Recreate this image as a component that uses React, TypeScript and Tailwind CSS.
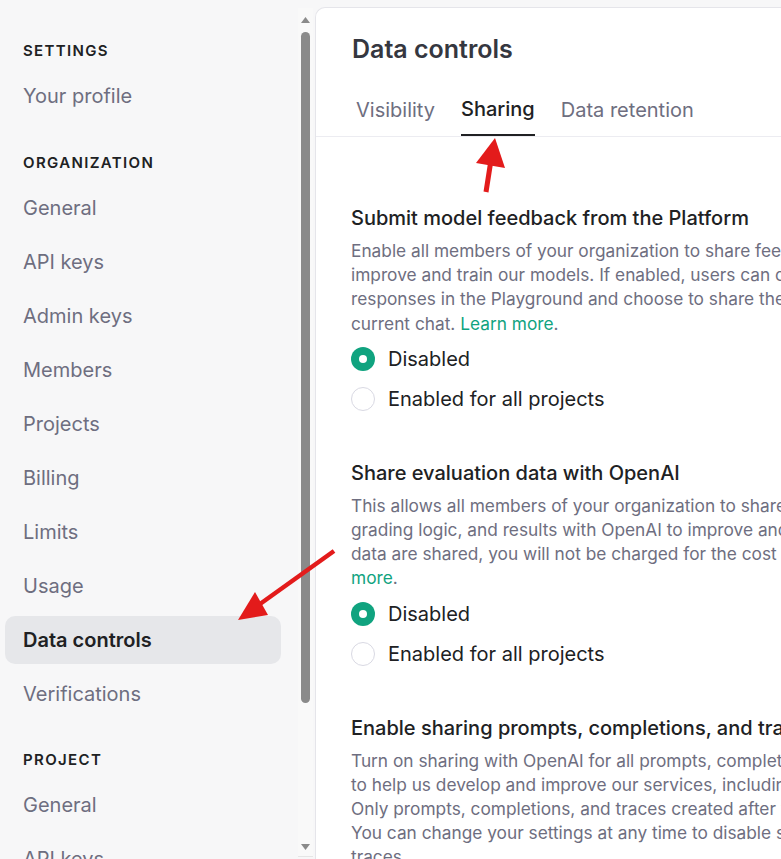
import React from "react";

const font = { fontFamily: "Inter, 'Noto Sans', sans-serif" };

function NavHeader({ label }: { label: string }) {
  return (
    <div className="h-[20px] px-[23px] flex items-center text-[15px] font-semibold tracking-[0.09em] text-[#202123]">
      {label}
    </div>
  );
}

function NavItem({ label, active }: { label: string; active?: boolean }) {
  return (
    <div
      className={
        active
          ? "h-[48px] mx-[5px] px-[18px] flex items-center rounded-[10px] bg-[#e6e7ea] text-[20px] font-semibold text-[#202123]"
          : "h-[48px] mx-[5px] px-[18px] flex items-center rounded-[10px] text-[20px] text-[#6e6e80]"
      }
    >
      {label}
    </div>
  );
}

function Radio({ label, checked }: { label: string; checked?: boolean }) {
  return (
    <div className="h-[40px] flex items-center gap-[13px]">
      {checked ? (
        <span className="size-[24px] rounded-full bg-[#10a37f] flex items-center justify-center">
          <span className="size-[8px] rounded-full bg-white" />
        </span>
      ) : (
        <span className="size-[24px] rounded-full border border-[#d9d9e3] bg-white" />
      )}
      <span className="text-[20px] text-[#202123]">{label}</span>
    </div>
  );
}

function Section({ title, lines, last }: { title: string; lines: React.ReactNode[]; last?: boolean }) {
  return (
    <div className="flex flex-col">
      <h3 className="h-[28px] flex items-center text-[20px] font-medium text-[#202123] whitespace-nowrap">{title}</h3>
      <div className="mt-[7px] flex flex-col text-[17.3px] leading-[24.2px] text-[#6e6e80]">
        {lines.map((l, i) => (
          <span key={i} className="whitespace-nowrap">
            {l}
          </span>
        ))}
      </div>
      {!last && (
        <div className="mt-[3px] flex flex-col">
          <Radio label="Disabled" checked />
          <Radio label="Enabled for all projects" />
        </div>
      )}
    </div>
  );
}

const green = "text-[#10a37f]";

export default function App() {
  return (
    <div className="relative w-[781px] h-[859px] overflow-hidden bg-[#f7f7f8] flex" style={font}>
      {/* Sidebar */}
      <div className="w-[286px] shrink-0 pt-[41px] flex flex-col">
        <NavHeader label="SETTINGS" />
        <div className="mt-[11px]">
          <NavItem label="Your profile" />
        </div>
        <div className="mx-[5px] mt-[13px] h-px bg-[#e9e9ed]" />
        <div className="mt-[20px]">
          <NavHeader label="ORGANIZATION" />
        </div>
        <div className="mt-[11px] flex flex-col gap-[6px]">
          <NavItem label="General" />
          <NavItem label="API keys" />
          <NavItem label="Admin keys" />
          <NavItem label="Members" />
          <NavItem label="Projects" />
          <NavItem label="Billing" />
          <NavItem label="Limits" />
          <NavItem label="Usage" />
          <NavItem label="Data controls" active />
          <NavItem label="Verifications" />
        </div>
        <div className="mx-[5px] mt-[12px] h-px bg-[#e9e9ed]" />
        <div className="mt-[20px]">
          <NavHeader label="PROJECT" />
        </div>
        <div className="mt-[11px] flex flex-col gap-[6px]">
          <NavItem label="General" />
          <NavItem label="API keys" />
        </div>
      </div>

      <div className="w-[12px] shrink-0" />

      {/* Scrollbar */}
      <div className="w-[15px] shrink-0 mt-[8px] h-[849px] bg-[#f9f9f9] border-b border-[#e5e5e5] flex flex-col items-center">
        <svg width="9" height="6" viewBox="0 0 9 6" className="mt-[9px]">
          <path d="M4.5 0 L9 6 L0 6 Z" fill="#8a8a8a" />
        </svg>
        <div className="mt-[9px] w-[9px] h-[671px] rounded-[5px] bg-[#8a8a8a]" />
        <div className="flex-1" />
        <svg width="9" height="6" viewBox="0 0 9 6" className="mb-[6px]">
          <path d="M0 0 L9 0 L4.5 6 Z" fill="#8a8a8a" />
        </svg>
      </div>

      <div className="w-[2px] shrink-0" />

      {/* Main panel */}
      <div className="flex-1 min-w-0 mt-[7px] bg-white rounded-tl-[10px] border-l border-t border-[#e5e5ea] flex flex-col">
        <div className="pl-[36px] pt-[26px]">
          <h1 className="h-[32px] flex items-center text-[25px] font-semibold text-[#353740] whitespace-nowrap">
            Data controls
          </h1>
        </div>
        <div className="mt-[18px] border-b border-[#ececf1] pl-[40px] flex gap-[26px] text-[20px] whitespace-nowrap">
          <div className="h-[52px] flex items-center text-[#6e6e80]">Visibility</div>
          <div className="h-[52px] flex items-center font-medium text-[#202123] border-b-2 border-[#202123] -mb-px">
            Sharing
          </div>
          <div className="h-[52px] flex items-center text-[#6e6e80]">Data retention</div>
        </div>

        <div className="pl-[35px] pt-[67px] flex flex-col gap-[40px]">
          <Section
            title="Submit model feedback from the Platform"
            lines={[
              "Enable all members of your organization to share feedback on model responses to help us",
              "improve and train our models. If enabled, users can choose to thumbs up or thumbs down",
              "responses in the Playground and choose to share their feedback along with the",
              <>
                current chat. <span className={green}>Learn more</span>.
              </>,
            ]}
          />
          <Section
            title="Share evaluation data with OpenAI"
            lines={[
              "This allows all members of your organization to share evaluation datasets, prompts,",
              "grading logic, and results with OpenAI to improve and train our models. When evaluation",
              <>
                data are shared, you will not be charged for the cost of running the evaluation.{" "}
                <span className={green}>Learn</span>
              </>,
              <>
                <span className={green}>more</span>.
              </>,
            ]}
          />
          <Section
            last
            title="Enable sharing prompts, completions, and traces with OpenAI"
            lines={[
              "Turn on sharing with OpenAI for all prompts, completions, and traces from your organization",
              "to help us develop and improve our services, including for improving and training our models.",
              "Only prompts, completions, and traces created after you turn this setting on will be shared.",
              "You can change your settings at any time to disable sharing prompts, completions, and",
              "traces.",
            ]}
          />
        </div>
      </div>

      {/* Annotation arrows */}
      <svg className="absolute inset-0 pointer-events-none" width="781" height="859" viewBox="0 0 781 859">
        <line x1="486" y1="192" x2="491" y2="160" stroke="#e31b1b" strokeWidth="5" />
        <path d="M495 138 L476 163 L505 168 Z" fill="#e31b1b" />
        <line x1="334" y1="551" x2="260" y2="604" stroke="#e31b1b" strokeWidth="4.5" />
        <path d="M238 620 L255 592 L268 615 Z" fill="#e31b1b" />
      </svg>
    </div>
  );
}
